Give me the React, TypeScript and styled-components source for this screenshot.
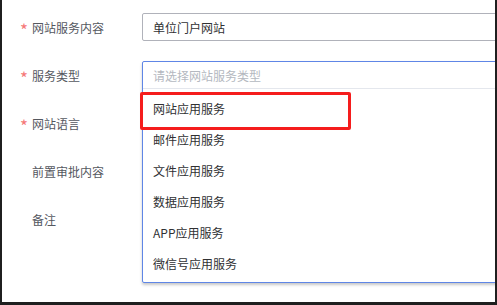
import React from 'react';
import styled, { createGlobalStyle } from 'styled-components';

const GlobalStyle = createGlobalStyle`
  html, body {
    margin: 0;
    padding: 0;
    background: #1f1f1f;
  }
  body {
    font-family: "Noto Sans CJK SC", "Noto Sans", sans-serif;
  }
`;

const fields = [
  { label: '网站服务内容', required: true, kind: 'input', value: '单位门户网站' },
  { label: '服务类型', required: true, kind: 'select', value: '' },
  { label: '网站语言', required: true, kind: 'none', value: '' },
  { label: '前置审批内容', required: false, kind: 'none', value: '' },
  { label: '备注', required: false, kind: 'none', value: '' },
];

const options = ['网站应用服务', '邮件应用服务', '文件应用服务', '数据应用服务', 'APP应用服务', '微信号应用服务'];

const App: React.FC = () => {
  return (
    <>
      <GlobalStyle />
      <Frame>
        <Form>
          {fields.map(f => (
            <Row key={f.label}>
              <Label>
                <Star>{f.required ? '*' : ''}</Star>
                {f.label}
              </Label>
              {f.kind === 'input' && <Input>{f.value}</Input>}
              {f.kind === 'select' && (
                <SelectWrap>
                  <Dropdown>
                    <Placeholder>请选择网站服务类型</Placeholder>
                    <Menu>
                      {options.map(o => (
                        <Option key={o}>{o}</Option>
                      ))}
                    </Menu>
                    <Highlight />
                  </Dropdown>
                </SelectWrap>
              )}
            </Row>
          ))}
        </Form>
      </Frame>
    </>
  );
};

const Frame = styled.div`
  width: 497px;
  height: 305px;
  box-sizing: border-box;
  background: #fff;
  border-left: 2px solid #1f1f1f;
  border-right: 2px solid #1f1f1f;
  border-bottom: 3px solid #1f1f1f;
  overflow: hidden;
`;

const Form = styled.div`
  display: flex;
  flex-direction: column;
  gap: 20px;
  padding-top: 13px;
`;

const Row = styled.div`
  display: grid;
  grid-template-columns: 140px 1fr;
  height: 28px;
  align-items: center;
`;

const Label = styled.div`
  display: flex;
  align-items: center;
  padding-left: 18px;
  font-size: 12px;
  color: #55585f;
`;

const Star = styled.span`
  width: 12px;
  color: #f57878;
  font-size: 17px;
  line-height: 1;
  padding-top: 5px;
`;

const Input = styled.div`
  height: 28px;
  box-sizing: border-box;
  width: calc(100% + 20px);
  border: 1px solid #b0b2ba;
  border-radius: 2px;
  padding-left: 10px;
  display: flex;
  align-items: center;
  font-size: 12px;
  color: #303133;
`;

const SelectWrap = styled.div`
  position: relative;
  height: 28px;
  z-index: 2;
`;

const Dropdown = styled.div`
  position: absolute;
  top: 0;
  left: 0;
  width: calc(100% + 20px);
  box-sizing: border-box;
  border: 1px solid #5f86e6;
  border-radius: 2px;
  background: #fff;
  box-shadow: 0 2px 3px rgba(0, 0, 0, 0.22);
`;

const Placeholder = styled.div`
  height: 27px;
  box-sizing: border-box;
  border-bottom: 1px solid #e4e7ed;
  padding-left: 10px;
  display: flex;
  align-items: center;
  font-size: 12px;
  color: #b4b8c0;
`;

const Menu = styled.ul`
  list-style: none;
  margin: 0;
  padding: 4px 0 3px;
`;

const Option = styled.li`
  height: 31px;
  padding-left: 10px;
  display: flex;
  align-items: center;
  font-size: 12px;
  color: #303133;
`;

const Highlight = styled.div`
  position: absolute;
  left: -3px;
  top: 30px;
  width: 211px;
  height: 38px;
  box-sizing: border-box;
  border: 3px solid #f51d1d;
  border-radius: 2px;
`;

export default App;
